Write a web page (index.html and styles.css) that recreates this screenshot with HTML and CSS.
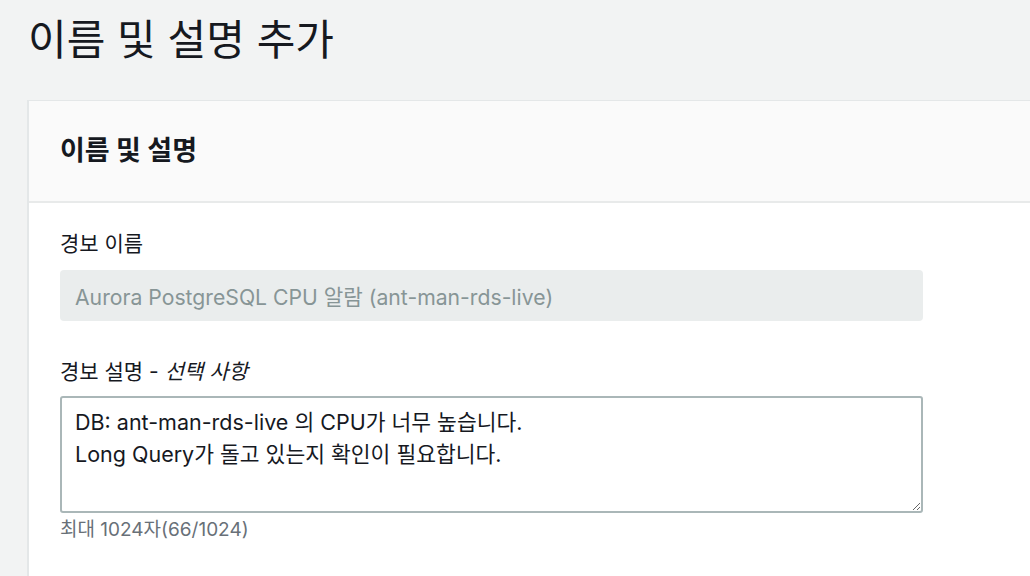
FILE: index.html
```html
<!DOCTYPE html>
<html lang="ko">
<head>
<meta charset="utf-8">
<link rel="stylesheet" href="styles.css">
</head>
<body>
<div class="page">
  <h1 class="title">이름 및 설명 추가</h1>
  <section class="card">
    <header class="card-header">
      <h2 class="card-title">이름 및 설명</h2>
    </header>
    <div class="card-body">
      <div class="field">
        <label class="label">경보 이름</label>
        <div class="input disabled">Aurora PostgreSQL CPU 알람 (ant-man-rds-live)</div>
      </div>
      <div class="field">
        <label class="label">경보 설명 - <i class="opt">선택 사항</i></label>
        <textarea class="textarea" readonly>DB: ant-man-rds-live 의 CPU가 너무 높습니다.
Long Query가 돌고 있는지 확인이 필요합니다.</textarea>
        <div class="hint">최대 1024자(66/1024)</div>
      </div>
    </div>
  </section>
</div>
</body>
</html>
```
FILE: styles.css
```css
html, body {
  margin: 0;
  padding: 0;
  background: #f2f3f3;
  overflow: hidden;
  height: 100%;
}
body {
  font-family: Inter, "Noto Sans CJK KR", sans-serif;
  color: #16191f;
}
.page {
  padding: 0 0 0 27px;
}
.title {
  margin: 0;
  padding: 11px 0 0 1px;
  font-size: 42px;
  line-height: 58px;
  font-weight: 400;
  color: #16191f;
  height: 90px;
  box-sizing: border-box;
}
.card {
  margin-top: 10px;
  margin-right: -20px;
  background: #ffffff;
  border-left: 2px solid #e4e7e8;
  border-top: 1px solid #e4e7e8;
  height: calc(100vh - 100px);
  box-sizing: border-box;
}
.card-header {
  background: #fafafa;
  border-bottom: 2px solid #e8eaea;
  height: 102px;
  box-sizing: border-box;
  display: flex;
  align-items: center;
  padding-left: 31px;
}
.card-title {
  margin: 0;
  font-size: 27px;
  line-height: 36px;
  font-weight: 700;
  color: #16191f;
}
.card-body {
  padding: 25px 0 0 31px;
  width: 863px;
}
.field {
  display: flex;
  flex-direction: column;
}
.field + .field {
  margin-top: 35px;
}
.label {
  font-size: 21px;
  line-height: 32px;
  color: #16191f;
  margin-bottom: 10px;
}
.field + .field .label {
  margin-bottom: 8px;
}
.opt {
  font-style: italic;
}
.input {
  height: 51px;
  border-radius: 4px;
  box-sizing: border-box;
  padding: 0 15px;
  display: flex;
  align-items: center;
  font-size: 21.2px;
}
.input.disabled {
  background: #eaeded;
  color: #879596;
}
.textarea {
  display: block;
  width: 100%;
  height: 117px;
  box-sizing: border-box;
  border: 2px solid #aab7b8;
  border-radius: 3px;
  padding: 8px 13px;
  font-family: Inter, "Noto Sans CJK KR", sans-serif;
  font-size: 21.5px;
  line-height: 32px;
  color: #16191f;
  background: #ffffff;
  resize: vertical;
  outline: none;
  margin: 0;
}
.hint {
  margin-top: 3px;
  font-size: 19px;
  line-height: 28px;
  color: #687078;
}
```
